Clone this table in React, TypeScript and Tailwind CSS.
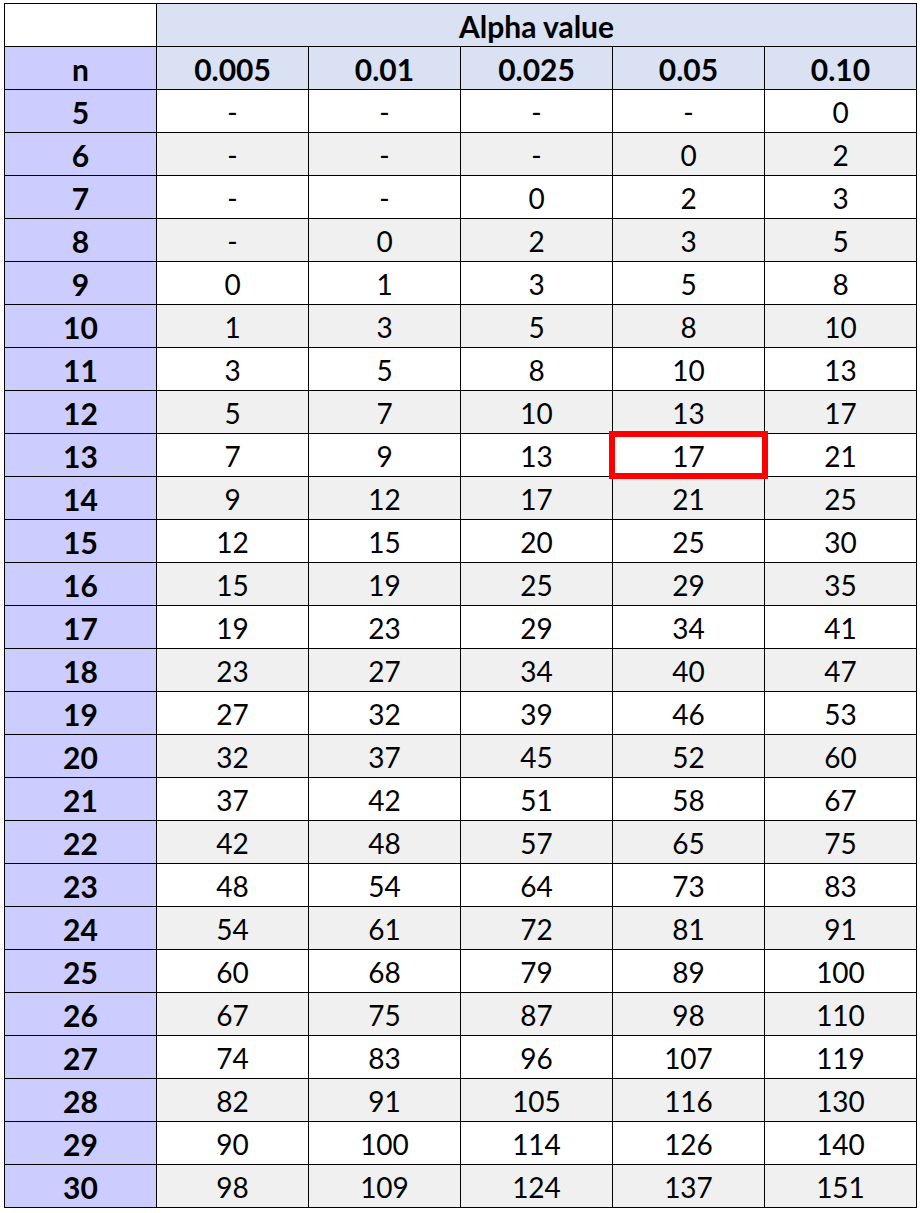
const alphas = ["0.005", "0.01", "0.025", "0.05", "0.10"];

const rows: [number, string[]][] = [
  [5, ["-", "-", "-", "-", "0"]],
  [6, ["-", "-", "-", "0", "2"]],
  [7, ["-", "-", "0", "2", "3"]],
  [8, ["-", "0", "2", "3", "5"]],
  [9, ["0", "1", "3", "5", "8"]],
  [10, ["1", "3", "5", "8", "10"]],
  [11, ["3", "5", "8", "10", "13"]],
  [12, ["5", "7", "10", "13", "17"]],
  [13, ["7", "9", "13", "17", "21"]],
  [14, ["9", "12", "17", "21", "25"]],
  [15, ["12", "15", "20", "25", "30"]],
  [16, ["15", "19", "25", "29", "35"]],
  [17, ["19", "23", "29", "34", "41"]],
  [18, ["23", "27", "34", "40", "47"]],
  [19, ["27", "32", "39", "46", "53"]],
  [20, ["32", "37", "45", "52", "60"]],
  [21, ["37", "42", "51", "58", "67"]],
  [22, ["42", "48", "57", "65", "75"]],
  [23, ["48", "54", "64", "73", "83"]],
  [24, ["54", "61", "72", "81", "91"]],
  [25, ["60", "68", "79", "89", "100"]],
  [26, ["67", "75", "87", "98", "110"]],
  [27, ["74", "83", "96", "107", "119"]],
  [28, ["82", "91", "105", "116", "130"]],
  [29, ["90", "100", "114", "126", "140"]],
  [30, ["98", "109", "124", "137", "151"]],
];

export default function App() {
  return (
    <div className="min-h-[1213px] bg-white pl-[4px] pt-[3px] font-['Lato','Open_Sans',sans-serif] text-[28px] text-black">
      <div className="grid w-[913px] grid-cols-6 gap-px bg-black p-px">
        <div className="h-[42px] bg-white" />
        <div className="col-span-5 flex h-[42px] items-center justify-center bg-[#d9e1f2] pt-[2px] text-[30px] font-bold">
          Alpha value
        </div>
        <div className="flex h-[42px] items-center justify-center bg-[#ccccff] pt-[2px] text-[30px] font-bold">n</div>
        {alphas.map((a) => (
          <div
            key={a}
            className="flex h-[42px] items-center justify-center bg-[#d9e1f2] pt-[2px] text-[30px] font-bold"
          >
            {a}
          </div>
        ))}
        {rows.map(([n, vals], i) => {
          const bg = i % 2 === 0 ? "bg-white" : "bg-[#f0f0f0]";
          return [
            <div
              key={`n${n}`}
              className="flex h-[42px] items-center justify-center bg-[#ccccff] pt-[2px] text-[30px] font-bold"
            >
              {n}
            </div>,
            ...vals.map((v, j) => (
              <div
                key={`${n}-${j}`}
                className={`relative flex h-[42px] items-center justify-center pt-[2px] ${bg}`}
              >
                {v}
                {n === 13 && j === 3 ? (
                  <div className="absolute -inset-x-[4px] -inset-y-[3px] z-10 border-[6px] border-[#ff0000]" />
                ) : null}
              </div>
            )),
          ];
        })}
      </div>
    </div>
  );
}
